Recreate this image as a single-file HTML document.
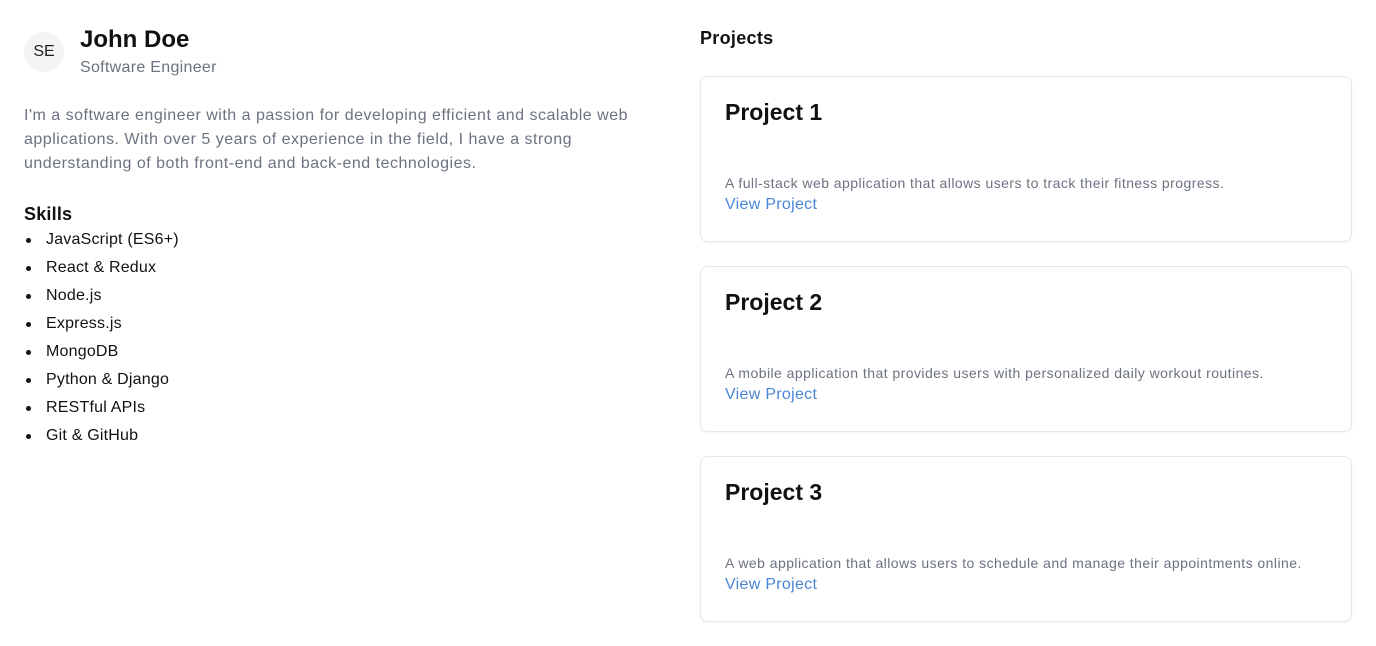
<!DOCTYPE html>
<html><head><meta charset="utf-8"><style>
*{margin:0;padding:0;box-sizing:border-box}
body{width:1376px;height:646px;background:#fff;font-family:"Liberation Sans",sans-serif;color:#111;position:relative;overflow:hidden}
.a{position:absolute;white-space:nowrap}
.av{left:24px;top:32px;width:40px;height:40px;border-radius:50%;background:#f3f4f6;font-size:16px;line-height:40px;text-align:center;color:#222}
.gray{color:#6b7280}
.card{position:absolute;left:700px;width:652px;height:166px;border:1px solid #e5e7eb;border-radius:8px;box-shadow:0 1px 2px rgba(0,0,0,.05)}
.card h2{position:absolute;left:24px;top:19px;font-size:23px;font-weight:bold;line-height:32px}
.card p{position:absolute;left:24px;top:96px;font-size:14px;line-height:20px;color:#6b7280;white-space:nowrap;letter-spacing:0.45px}
.card a{position:absolute;left:24px;top:116px;font-size:16px;line-height:24px;color:#4a86d6;text-decoration:none;letter-spacing:0.3px}
li{position:absolute;left:46px;font-size:16px;line-height:24px;list-style:none;white-space:nowrap;letter-spacing:0.2px}
li:before{content:"";position:absolute;left:-20px;top:10px;width:5px;height:5px;border-radius:50%;background:#111}
</style></head><body>
<div class="a av">SE</div>
<div class="a" style="left:80px;top:24px;font-size:24px;font-weight:bold;line-height:32px">John Doe</div>
<div class="a gray" style="left:80px;top:56px;font-size:16px;line-height:24px;letter-spacing:0.3px">Software Engineer</div>
<div class="a gray" style="left:24px;top:104px;font-size:16px;line-height:24px;letter-spacing:0.5px">I'm a software engineer with a passion for developing efficient and scalable web<br>applications. With over 5 years of experience in the field, I have a strong<br>understanding of both front-end and back-end technologies.</div>
<div class="a" style="left:24px;top:201px;font-size:18px;font-weight:bold;line-height:26px;letter-spacing:0.2px">Skills</div>
<ul>
<li style="top:228px">JavaScript (ES6+)</li>
<li style="top:256px">React &amp; Redux</li>
<li style="top:284px">Node.js</li>
<li style="top:312px">Express.js</li>
<li style="top:340px">MongoDB</li>
<li style="top:368px">Python &amp; Django</li>
<li style="top:396px">RESTful APIs</li>
<li style="top:424px">Git &amp; GitHub</li>
</ul>
<div class="a" style="left:700px;top:25px;font-size:18px;font-weight:bold;line-height:26px;letter-spacing:0.3px">Projects</div>
<div class="card" style="top:76px"><h2>Project 1</h2><p>A full-stack web application that allows users to track their fitness progress.</p><a>View Project</a></div>
<div class="card" style="top:266px"><h2>Project 2</h2><p>A mobile application that provides users with personalized daily workout routines.</p><a>View Project</a></div>
<div class="card" style="top:456px"><h2>Project 3</h2><p>A web application that allows users to schedule and manage their appointments online.</p><a>View Project</a></div>
</body></html>
